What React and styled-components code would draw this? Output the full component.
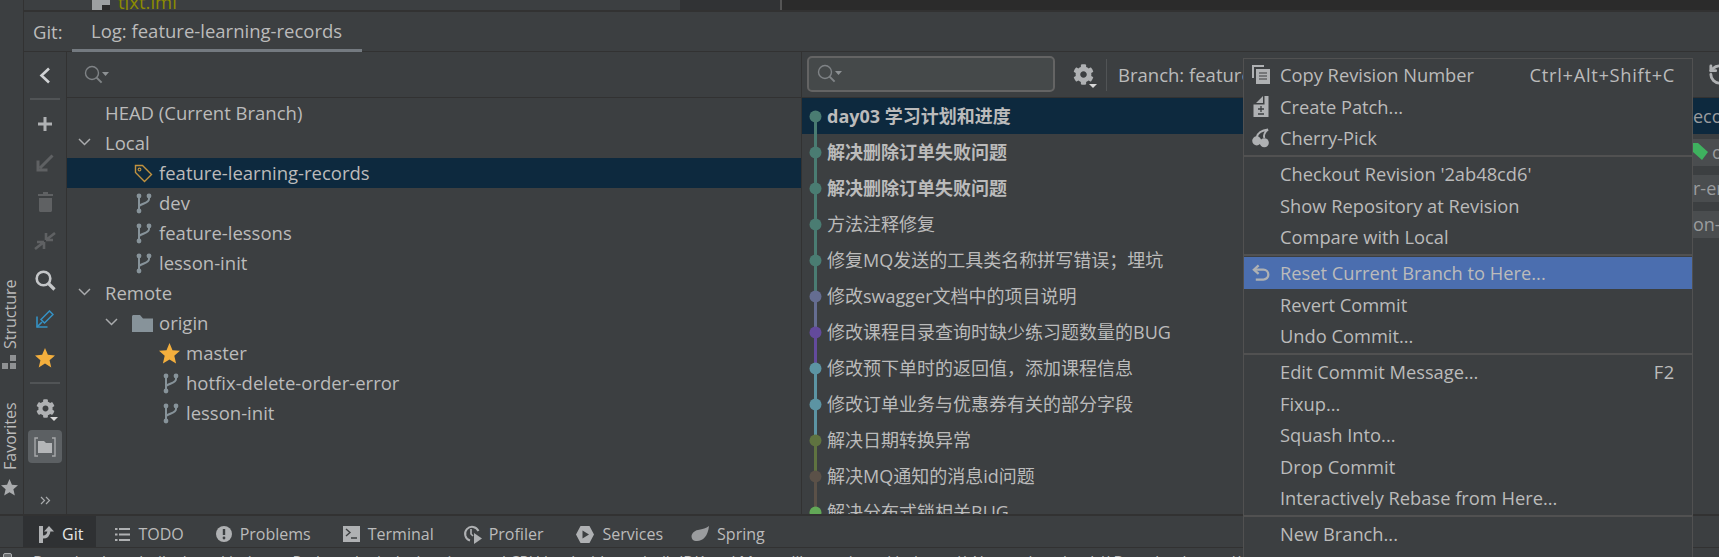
import React from 'react';
import styled, { createGlobalStyle } from 'styled-components';
import { FaCog } from 'react-icons/fa';
import { RotateCcw } from 'lucide-react';

const GlobalStyle = createGlobalStyle`
  html, body {
    margin: 0;
    padding: 0;
    background: #3c3f41;
    overflow: hidden;
  }
  * {
    box-sizing: border-box;
  }
`;

const Page = styled.div`
  position: relative;
  display: flex;
  flex-direction: column;
  width: 1719px;
  height: 557px;
  overflow: hidden;
  background: #3c3f41;
  color: #bbbbbb;
  font-family: "Open Sans", "Noto Sans CJK SC", sans-serif;
  font-size: 18.5px;
  white-space: nowrap;
`;

const Main = styled.div`
  display: flex;
  height: 514px;
  flex-shrink: 0;
`;

const Stripe = styled.div`
  display: flex;
  flex-direction: column;
  align-items: center;
  width: 24px;
  padding: 277px 4px 0 0;
  border-right: 1px solid #323232;
  flex-shrink: 0;
`;

const StripeLabel = styled.div`
  writing-mode: vertical-rl;
  transform: rotate(180deg);
  font-size: 16px;
  line-height: 18px;
  height: ${(p) => p.$height}px;
  flex-shrink: 0;
  text-align: left;
`;

const StripeIcon = styled.div`
  display: flex;
  margin: ${(p) => p.$margin};
`;

const Workspace = styled.div`
  display: flex;
  flex-direction: column;
  flex: 1;
  min-width: 0;
`;

const TopStrip = styled.div`
  display: flex;
  height: 12px;
  border-bottom: 2px solid #323232;
  flex-shrink: 0;
  overflow: hidden;
`;

const ProjectPane = styled.div`
  display: flex;
  align-items: flex-end;
  gap: 8px;
  width: 656px;
  padding-left: 68px;
  overflow: hidden;
`;

const FileName = styled.span`
  color: #8c8c00;
  line-height: 18px;
  margin-bottom: -1px;
  flex-shrink: 0;
`;

const GutterPane = styled.div`
  width: 102px;
  background: #313335;
  border-right: 2px solid #555555;
`;

const EditorPane = styled.div`
  flex: 1;
  background: #2b2b2b;
`;

const Header = styled.div`
  display: flex;
  align-items: stretch;
  height: 40px;
  border-bottom: 1px solid #323232;
  flex-shrink: 0;
`;

const HeaderTitle = styled.div`
  display: flex;
  align-items: center;
  padding-left: 9px;
  width: 48px;
`;

const Tab = styled.div`
  display: flex;
  align-items: center;
  width: 290px;
  padding-left: 19px;
  border-bottom: 3px solid #747a80;
  margin-bottom: -1px;
`;

const Content = styled.div`
  display: flex;
  flex: 1;
  min-height: 0;
`;

const SideToolbar = styled.div`
  display: flex;
  flex-direction: column;
  align-items: center;
  width: 43px;
  border-right: 1px solid #323232;
  flex-shrink: 0;
`;

const ToolButton = styled.div`
  display: flex;
  align-items: center;
  justify-content: center;
  width: 34px;
  height: ${(p) => p.$height || 39}px;
  margin-top: ${(p) => p.$top || 0}px;
  border-radius: 4px;
  background: ${(p) => (p.$active ? '#5c6063' : 'transparent')};
  flex-shrink: 0;
`;

const ToolDivider = styled.div`
  width: 30px;
  height: 2px;
  background: #515456;
  margin: ${(p) => p.$margin};
  flex-shrink: 0;
`;

const BranchPane = styled.div`
  display: flex;
  flex-direction: column;
  width: 735px;
  border-right: 1px solid #323232;
  flex-shrink: 0;
`;

const FilterRow = styled.div`
  display: flex;
  align-items: center;
  height: 46px;
  padding-left: 17px;
  border-bottom: 1px solid #323232;
  flex-shrink: 0;
`;

const TreeRow = styled.div`
  display: flex;
  align-items: center;
  height: 30px;
  padding: 0 0 2px ${(p) => 11 + p.$depth * 27}px;
  background: ${(p) => (p.$selected ? '#0d293e' : 'transparent')};
`;

const Slot = styled.span`
  display: flex;
  align-items: center;
  width: 27px;
  flex-shrink: 0;
`;

const IconSlot = styled(Slot)`
  padding-top: 2px;
`;

const LogPane = styled.div`
  display: flex;
  flex-direction: column;
  flex: 1;
  min-width: 0;
`;

const LogToolbar = styled.div`
  display: flex;
  align-items: center;
  height: 46px;
  padding-left: 5px;
  border-bottom: 1px solid #323232;
  flex-shrink: 0;
`;

const SearchBox = styled.div`
  display: flex;
  align-items: center;
  width: 248px;
  height: 36px;
  padding-left: 8px;
  background: #45494a;
  border: 2px solid #646464;
  border-radius: 5px;
  margin-top: -1px;
  flex-shrink: 0;
`;

const GearWrap = styled.div`
  position: relative;
  display: flex;
  margin-left: ${(p) => p.$left || 0}px;
  color: #afb1b3;
  flex-shrink: 0;
`;

const Caret = styled.span`
  position: absolute;
  right: -3px;
  bottom: -3px;
  width: 0;
  height: 0;
  border-left: 4px solid transparent;
  border-right: 4px solid transparent;
  border-top: 4px solid #d8d8d8;
`;

const ToolbarDivider = styled.div`
  width: 1px;
  height: 32px;
  margin-left: 12px;
  background: #515456;
  flex-shrink: 0;
`;

const BranchFilter = styled.div`
  margin-left: 11px;
`;

const RefreshWrap = styled.div`
  display: flex;
  margin-left: auto;
  margin-right: -12px;
  color: #afb1b3;
`;

const CommitList = styled.div`
  flex: 1;
  min-height: 0;
  overflow: hidden;
`;

const CommitRow = styled.div`
  display: flex;
  align-items: center;
  height: 36px;
  background: ${(p) => (p.$selected ? '#0d293e' : 'transparent')};
  font-size: 18px;
  font-weight: ${(p) => (p.$bold ? 700 : 400)};
`;

const CommitText = styled.span`
  position: relative;
  top: -1px;
`;

const RefLabel = styled.div`
  display: flex;
  align-items: center;
  gap: 4px;
  width: 26px;
  height: 27px;
  margin-left: auto;
  overflow: hidden;
  font-size: 18px;
  font-weight: 400;
  color: #9a9c9e;
  background: ${(p) => (p.$plain ? 'transparent' : '#4a4d4f')};
  flex-shrink: 0;
`;

const TagWrap = styled.span`
  display: flex;
  flex-shrink: 0;
`;

const CommitMenu = styled.div`
  position: absolute;
  left: 1243px;
  top: 58px;
  bottom: 0;
  width: 450px;
  background: #3c3f41;
  border: 1px solid #515151;
  border-bottom: 0;
  font-size: 18.3px;
`;

const MenuItem = styled.div`
  display: flex;
  align-items: center;
  height: 31.5px;
  padding: 0 17px 0 8px;
  background: ${(p) => (p.$active ? '#4b6eaf' : 'transparent')};
`;

const MenuIcon = styled.span`
  display: flex;
  justify-content: center;
  align-items: center;
  width: 18px;
  margin-right: 10px;
  flex-shrink: 0;
`;

const Shortcut = styled.span`
  margin-left: auto;
  letter-spacing: 0.7px;
`;

const MenuSeparator = styled.div`
  height: 2px;
  margin: 1px 0 1.5px;
  background: #515151;
`;

const BottomBar = styled.div`
  display: flex;
  align-items: stretch;
  height: 34px;
  padding-left: 23px;
  border-top: 2px solid #323232;
  border-bottom: 1px solid #323232;
  font-size: 16px;
  flex-shrink: 0;
`;

const BarItem = styled.div`
  display: flex;
  align-items: center;
  gap: ${(p) => p.$gap || 8}px;
  padding: 5px ${(p) => (p.$active ? 13 : 16)}px 0 ${(p) => p.$pad || 16}px;
  margin-right: ${(p) => (p.$active ? 3 : 0)}px;
  background: ${(p) => (p.$active ? '#2f3133' : 'transparent')};
  color: ${(p) => (p.$active ? '#e6e6e6' : '#bbbbbb')};
`;

const StatusLine = styled.div`
  display: flex;
  align-items: flex-start;
  height: 9px;
  padding: 5px 0 0 3px;
  font-size: 15.4px;
  line-height: 20px;
`;

const StatusIcon = styled.span`
  width: 9px;
  height: 9px;
  margin-right: 21px;
  background: #6b6e70;
  border: 1px solid #afb1b3;
  border-radius: 2px;
  flex-shrink: 0;
`;

const Grey = '#afb1b3';
const Dim = '#5f6163';
const Steel = '#87939a';

const Chevron = () => (
  <svg width="13" height="8" viewBox="0 0 13 8">
    <path d="M1 1l5.5 5.5L12 1" fill="none" stroke="#a9abad" strokeWidth="1.5" />
  </svg>
);

const SearchGlyph = () => (
  <svg width="26" height="20" viewBox="0 0 26 20">
    <circle cx="8" cy="8" r="6.5" fill="none" stroke="#7f8386" strokeWidth="1.4" />
    <path d="M12.6 12.6l5 5" stroke="#7f8386" strokeWidth="2" />
    <path d="M18 7h7l-3.5 4z" fill="#8d9194" />
  </svg>
);

const BranchGlyph = () => (
  <svg width="20" height="21" viewBox="-4 0 20 21">
    <g fill="none" stroke={Steel} strokeWidth="2">
      <path d="M3 3v15" />
      <path d="M13 3v3c0 4-6 4-10 7" />
    </g>
    <circle cx="3" cy="3" r="2.4" fill={Steel} />
    <circle cx="3" cy="18" r="2.4" fill={Steel} />
    <circle cx="13" cy="3" r="2.4" fill={Steel} />
  </svg>
);

const TagGlyph = () => (
  <svg width="21" height="19" viewBox="-2 0 21 19">
    <path d="M1.5 1.5h7l9 9-7 7-9-9z" fill="none" stroke="#c1923f" strokeWidth="1.4" />
    <circle cx="5.5" cy="5.5" r="1.4" fill="none" stroke="#c1923f" strokeWidth="1.1" />
  </svg>
);

const FolderGlyph = () => (
  <svg width="21" height="17" viewBox="0 0 21 17">
    <path d="M0 1.5C0 .7.7 0 1.5 0H8l3 3.5h10V17H0z" fill={Steel} />
  </svg>
);

const FileGlyph = () => (
  <svg width="18" height="14" viewBox="0 0 18 14">
    <path d="M0 0h18v14H0z" fill="#9da0a2" />
    <path d="M10 9h8v5h-8z" fill="#2b2b2b" />
  </svg>
);

const StarGlyph = ({ color = '#f4af3d', size = 21 }) => (
  <svg width={size} height={size} viewBox="0 0 21 21">
    <path d="M10.5 0l3 7.2 7.5.6-5.7 5 1.8 7.7-6.6-4.1-6.6 4.1 1.8-7.7L0 7.8l7.5-.6z" fill={color} />
  </svg>
);

const PlusGlyph = () => (
  <svg width="16" height="16" viewBox="0 0 16 16">
    <path d="M8 1v14M1 8h14" stroke={Grey} strokeWidth="3" />
  </svg>
);

const BackGlyph = () => (
  <svg width="12" height="17" viewBox="0 0 12 17">
    <path d="M10 1.5l-7.5 7 7.5 7" fill="none" stroke="#d0d2d4" strokeWidth="2.6" />
  </svg>
);

const DownLeftGlyph = () => (
  <svg width="18" height="18" viewBox="0 0 18 18">
    <path d="M16.5 1.5L4 14M2 6.5V16h9.5" fill="none" stroke={Dim} strokeWidth="3" />
  </svg>
);

const TrashGlyph = () => (
  <svg width="15" height="20" viewBox="0 0 15 20">
    <path d="M5 0h5v2h5v2H0V2h5zM1 6h13v12.5c0 .8-.7 1.5-1.5 1.5h-10C1.7 20 1 19.3 1 18.5z" fill={Dim} />
  </svg>
);

const MergeGlyph = () => (
  <svg width="22" height="20" viewBox="0 0 22 20">
    <path d="M12 9L21 2M12 9h7M12 9V2M10 11l-9 7M10 11H3M10 11v7" fill="none" stroke={Dim} strokeWidth="2.6" />
  </svg>
);

const BigSearchGlyph = () => (
  <svg width="21" height="21" viewBox="0 0 21 21">
    <circle cx="8.5" cy="8.5" r="6.8" fill="none" stroke="#c4c6c8" strokeWidth="2.6" />
    <path d="M13.5 13.5l6 6" stroke="#c4c6c8" strokeWidth="3.2" />
  </svg>
);

const BlueArrowGlyph = () => (
  <svg width="18" height="18" viewBox="0 0 18 18">
    <path d="M13.5 1L17 4.5 8.5 13 5 9.5z" fill="none" stroke="#3592c4" strokeWidth="1.5" />
    <path d="M1 6.5V17h10.5" fill="none" stroke="#3592c4" strokeWidth="1.6" />
    <path d="M1 17l5-5" stroke="#3592c4" strokeWidth="1.6" />
  </svg>
);

const FolderFrameGlyph = () => (
  <svg width="22" height="20" viewBox="0 0 22 20">
    <path d="M4 1H1v18h3M18 1h3v18h-3" fill="none" stroke="#a6a8aa" strokeWidth="1.4" />
    <path d="M4 4h6l2 2h6v10H4z" fill="#b4b6b8" />
  </svg>
);

const MoreGlyph = () => (
  <svg width="11" height="9" viewBox="0 0 11 9">
    <path d="M1 1l3.5 3.5L1 8M6 1l3.5 3.5L6 8" fill="none" stroke="#a9abad" strokeWidth="1.2" />
  </svg>
);

const StructureGlyph = () => (
  <svg width="15" height="14" viewBox="0 0 15 14">
    <path d="M8 0h6v6H8zM0 8h6v6H0zM8 8h6v6H8z" fill="#8f9193" />
  </svg>
);

const CopyGlyph = () => (
  <svg width="18" height="19" viewBox="0 0 18 19">
    <path d="M0 0h12v2H2v11H0z" fill={Grey} />
    <path d="M4 4h14v15H4z" fill={Grey} />
    <path d="M7 8h8M7 11h8M7 14h8" stroke="#3c3f41" strokeWidth="1.2" />
  </svg>
);

const PatchGlyph = () => (
  <svg width="16" height="21" viewBox="0 0 16 21">
    <path d="M10 0v7H3zM11.5 0H15.5V21H.5V8.5h11z" fill={Grey} />
    <path d="M8 10v6M5 13h6M5 18h6" stroke="#3c3f41" strokeWidth="1.3" />
  </svg>
);

const CherryGlyph = () => (
  <svg width="19" height="20" viewBox="0 0 19 20">
    <circle cx="5" cy="13" r="4.8" fill={Grey} />
    <circle cx="13" cy="15" r="4.8" fill={Grey} />
    <path d="M5 9C6 5 10 2 17 1M13 10c-1-3 0-6 4-9" fill="none" stroke={Grey} strokeWidth="2" />
  </svg>
);

const UndoGlyph = () => (
  <svg width="19" height="17" viewBox="0 0 19 17">
    <path d="M7 1L2 5.5 7 10" fill="none" stroke={Grey} strokeWidth="2.4" />
    <path d="M2.5 5.5H12a5.2 5.2 0 0 1 0 10.5H4" fill="none" stroke={Grey} strokeWidth="2.4" />
  </svg>
);

const GitBarGlyph = () => (
  <svg width="15" height="17" viewBox="0 0 15 17">
    <path d="M0 0h4v17H0z" fill={Grey} />
    <path d="M4 11c3.500 0 5.500-1.500 6-6" fill="none" stroke={Grey} strokeWidth="3" />
    <path d="M5 5.500L10 0l5 5.500z" fill={Grey} />
  </svg>
);

const TodoGlyph = () => (
  <svg width="15" height="13" viewBox="0 0 15 13">
    <path d="M0 1h2.5M4 1h11M0 6.5h2.5M4 6.5h11M0 12h2.5M4 12h11" stroke={Grey} strokeWidth="2" />
  </svg>
);

const ProblemsGlyph = () => (
  <svg width="16" height="16" viewBox="0 0 16 16">
    <circle cx="8" cy="8" r="8" fill={Grey} />
    <path d="M8 3v6" stroke="#3c3f41" strokeWidth="2.4" />
    <circle cx="8" cy="12" r="1.4" fill="#3c3f41" />
  </svg>
);

const TerminalGlyph = () => (
  <svg width="17" height="16" viewBox="0 0 17 16">
    <path d="M0 0h17v16H0z" fill={Grey} />
    <path d="M3 3l4 3.5L3 10M8 12h6" fill="none" stroke="#3c3f41" strokeWidth="1.4" />
  </svg>
);

const ProfilerGlyph = () => (
  <svg width="20" height="19" viewBox="0 0 20 19">
    <path d="M7 15.5A7 7 0 1 1 15.5 6" fill="none" stroke={Grey} strokeWidth="2" />
    <path d="M8 4v5l2 2" fill="none" stroke={Grey} strokeWidth="1.6" />
    <path d="M11 8l8 5.5-8 5.5z" fill={Grey} />
  </svg>
);

const ServicesGlyph = () => (
  <svg width="18" height="17" viewBox="0 0 18 17">
    <path d="M4.5 0h9L18 8.5 13.5 17h-9L0 8.5z" fill={Grey} />
    <path d="M6.5 4.5l6.500 4-6.500 4z" fill="#3c3f41" />
  </svg>
);

const SpringGlyph = () => (
  <svg width="18" height="16" viewBox="0 0 18 16">
    <path d="M18 0c-1 10-6 15-12 15-2 0-3.500-.5-4.500-1.500C-1 10 1.500 5 7 4c5-1 8-1.500 11-4z" fill="#9a9c9e" />
  </svg>
);

const GreenTag = () => (
  <TagWrap>
    <svg width="15" height="18" viewBox="0 0 15 18">
      <path d="M0 0h5l10 9-6 8L0 9z" fill="#3fb15f" />
    </svg>
  </TagWrap>
);

const Graph = ({ color, prev }) => (
  <svg width="25" height="36" viewBox="0 0 25 36">
    {prev && <line x1="13.5" y1="0" x2="13.5" y2="18" stroke={prev} strokeWidth="3" />}
    <line x1="13.5" y1="18" x2="13.5" y2="36" stroke={color} strokeWidth="3" />
    <circle cx="13.5" cy="18.5" r="6" fill={color} />
  </svg>
);

const teal = '#4a7c72';
const commits = [
  { text: 'day03 学习计划和进度', color: teal, bold: true, selected: true, ref: 'ecords', plain: true },
  { text: '解决删除订单失败问题', color: teal, bold: true, tag: true, ref: 'origin' },
  { text: '解决删除订单失败问题', color: teal, bold: true, ref: 'r-error' },
  { text: '方法注释修复', color: teal, ref: 'on-init' },
  { text: '修复MQ发送的工具类名称拼写错误\uFF1B埋坑', color: teal },
  { text: '修改swagger文档中的项目说明', color: '#656d91' },
  { text: '修改课程目录查询时缺少练习题数量的BUG', color: '#634a9c' },
  { text: '修改预下单时的返回值\uFF0C添加课程信息', color: '#5c94a3' },
  { text: '修改订单业务与优惠券有关的部分字段', color: '#5c94a3' },
  { text: '解决日期转换异常', color: '#5f7340' },
  { text: '解决MQ通知的消息id问题', color: '#5b5148' },
  { text: '解决分布式锁相关BUG', color: '#62a857' },
];

const tree = [
  { label: 'HEAD (Current Branch)', depth: 0 },
  { label: 'Local', depth: 0, open: true },
  { label: 'feature-learning-records', depth: 1, icon: <TagGlyph />, selected: true },
  { label: 'dev', depth: 1, icon: <BranchGlyph /> },
  { label: 'feature-lessons', depth: 1, icon: <BranchGlyph /> },
  { label: 'lesson-init', depth: 1, icon: <BranchGlyph /> },
  { label: 'Remote', depth: 0, open: true },
  { label: 'origin', depth: 1, open: true, icon: <FolderGlyph /> },
  { label: 'master', depth: 2, icon: <StarGlyph /> },
  { label: 'hotfix-delete-order-error', depth: 2, icon: <BranchGlyph /> },
  { label: 'lesson-init', depth: 2, icon: <BranchGlyph /> },
];

const menu = [
  { label: 'Copy Revision Number', icon: <CopyGlyph />, shortcut: 'Ctrl+Alt+Shift+C' },
  { label: 'Create Patch...', icon: <PatchGlyph /> },
  { label: 'Cherry-Pick', icon: <CherryGlyph /> },
  null,
  { label: "Checkout Revision '2ab48cd6'" },
  { label: 'Show Repository at Revision' },
  { label: 'Compare with Local' },
  null,
  { label: 'Reset Current Branch to Here...', icon: <UndoGlyph />, active: true },
  { label: 'Revert Commit' },
  { label: 'Undo Commit...' },
  null,
  { label: 'Edit Commit Message...', shortcut: 'F2' },
  { label: 'Fixup...' },
  { label: 'Squash Into...' },
  { label: 'Drop Commit' },
  { label: 'Interactively Rebase from Here...' },
  null,
  { label: 'New Branch...' },
];

const tools = [
  { icon: <GitBarGlyph />, label: 'Git', active: true },
  { icon: <TodoGlyph />, label: 'TODO' },
  { icon: <ProblemsGlyph />, label: 'Problems' },
  { icon: <TerminalGlyph />, label: 'Terminal' },
  { icon: <ProfilerGlyph />, label: 'Profiler', pad: 13, gap: 6 },
  { icon: <ServicesGlyph />, label: 'Services', pad: 17 },
  { icon: <SpringGlyph />, label: 'Spring', pad: 12 },
];

export default function App() {
  return (
    <Page>
      <GlobalStyle />
      <Main>
        <Stripe>
          <StripeLabel $height={72}>Structure</StripeLabel>
          <StripeIcon $margin="6px 0 0">
            <StructureGlyph />
          </StripeIcon>
          <StripeLabel $height={101}>Favorites</StripeLabel>
          <StripeIcon $margin="9px 0 0">
            <StarGlyph color="#a9abad" size={17} />
          </StripeIcon>
        </Stripe>

        <Workspace>
          <TopStrip>
            <ProjectPane>
              <FileGlyph />
              <FileName>tjxt.iml</FileName>
            </ProjectPane>
            <GutterPane />
            <EditorPane />
          </TopStrip>

          <Header>
            <HeaderTitle>Git:</HeaderTitle>
            <Tab>Log: feature-learning-records</Tab>
          </Header>

          <Content>
            <SideToolbar>
              <ToolButton $height={46}>
                <BackGlyph />
              </ToolButton>
              <ToolDivider $margin="0 0 4.5px" />
              <ToolButton>
                <PlusGlyph />
              </ToolButton>
              <ToolButton>
                <DownLeftGlyph />
              </ToolButton>
              <ToolButton>
                <TrashGlyph />
              </ToolButton>
              <ToolButton>
                <MergeGlyph />
              </ToolButton>
              <ToolButton>
                <BigSearchGlyph />
              </ToolButton>
              <ToolButton>
                <BlueArrowGlyph />
              </ToolButton>
              <ToolButton>
                <StarGlyph size={20} />
              </ToolButton>
              <ToolDivider $margin="4.5px 0 6px" />
              <ToolButton $height={36}>
                <GearWrap>
                  <FaCog size={19} />
                  <Caret />
                </GearWrap>
              </ToolButton>
              <ToolButton $active $height={33} $top={4}>
                <FolderFrameGlyph />
              </ToolButton>
              <ToolButton $height={74}>
                <MoreGlyph />
              </ToolButton>
            </SideToolbar>

            <BranchPane>
              <FilterRow>
                <SearchGlyph />
              </FilterRow>
              {tree.map((node, i) => (
                <TreeRow key={i} $depth={node.depth} $selected={node.selected}>
                  <Slot>{node.open && <Chevron />}</Slot>
                  {node.icon && <IconSlot>{node.icon}</IconSlot>}
                  {node.label}
                </TreeRow>
              ))}
            </BranchPane>

            <LogPane>
              <LogToolbar>
                <SearchBox>
                  <SearchGlyph />
                </SearchBox>
                <GearWrap $left={18}>
                  <FaCog size={21} />
                  <Caret />
                </GearWrap>
                <ToolbarDivider />
                <BranchFilter>Branch: feature-learning-records</BranchFilter>
                <RefreshWrap>
                  <RotateCcw size={23} strokeWidth={3} />
                </RefreshWrap>
              </LogToolbar>
              <CommitList>
                {commits.map((commit, i) => (
                  <CommitRow key={i} $selected={commit.selected} $bold={commit.bold}>
                    <Graph color={commit.color} prev={i > 0 ? commits[i - 1].color : null} />
                    <CommitText>{commit.text}</CommitText>
                    {commit.ref && (
                      <RefLabel $plain={commit.plain}>
                        {commit.tag && <GreenTag />}
                        {commit.ref}
                      </RefLabel>
                    )}
                  </CommitRow>
                ))}
              </CommitList>
            </LogPane>
          </Content>
        </Workspace>
      </Main>

      <BottomBar>
        {tools.map((tool) => (
          <BarItem key={tool.label} $active={tool.active} $pad={tool.pad} $gap={tool.gap}>
            {tool.icon}
            {tool.label}
          </BarItem>
        ))}
      </BottomBar>

      <StatusLine>
        <StatusIcon />
        Download pre-built shared indexes: Reduce the indexing time and CPU load with pre-built JDK and Maven library shared indexes // Always download // Download once // Don't show again // Configure... (moments ago)
      </StatusLine>

      <CommitMenu>
        {menu.map((item, i) =>
          item ? (
            <MenuItem key={i} $active={item.active}>
              <MenuIcon>{item.icon}</MenuIcon>
              {item.label}
              {item.shortcut && <Shortcut>{item.shortcut}</Shortcut>}
            </MenuItem>
          ) : (
            <MenuSeparator key={i} />
          )
        )}
      </CommitMenu>
    </Page>
  );
}
